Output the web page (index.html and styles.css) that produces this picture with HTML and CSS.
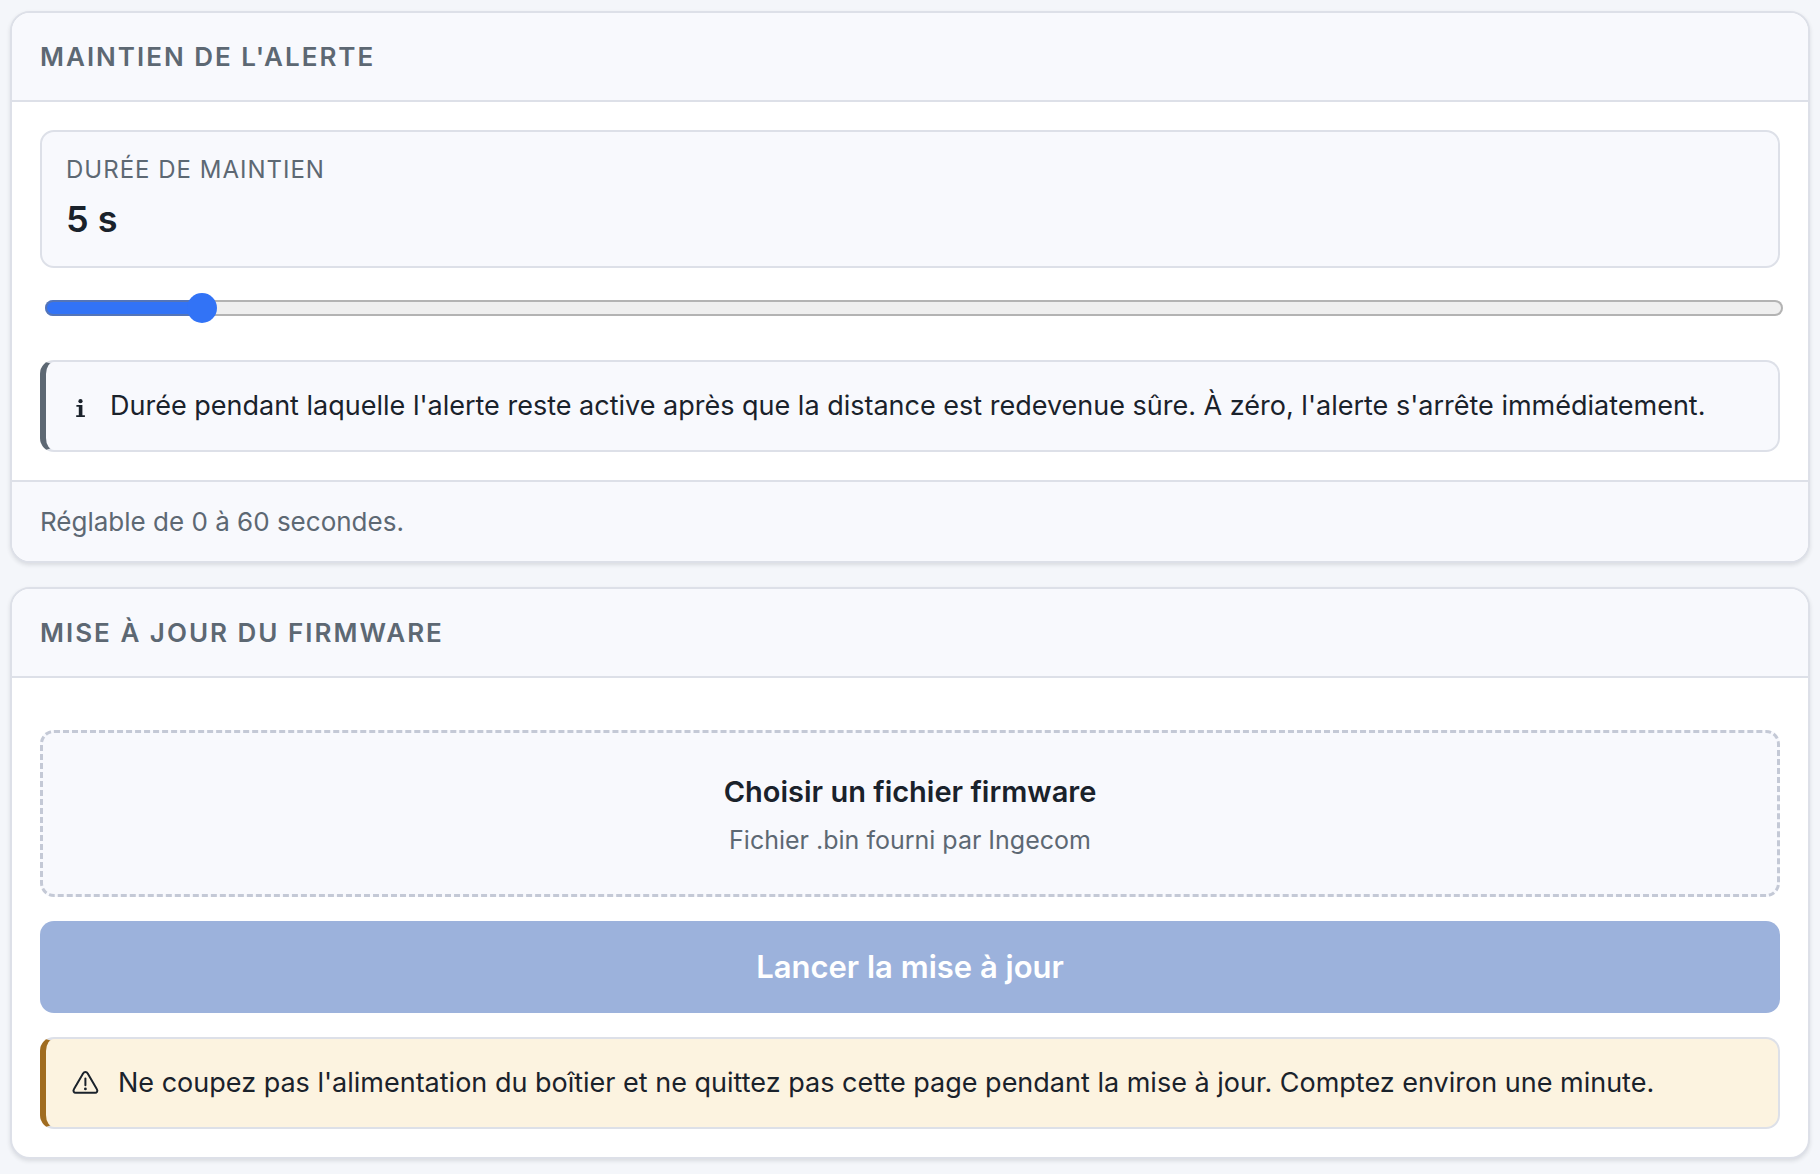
FILE: index.html
```html
<!DOCTYPE html>
<html lang="fr">

<head>
    <meta charset="UTF-8">
    <meta name="viewport" content="width=device-width, initial-scale=1">
    <title>Réglages</title>
    <link rel="stylesheet" href="styles.css">
</head>

<body>
    <main class="page">
        <section class="card">
            <h2 class="card-head">Maintien de l'alerte</h2>
            <div class="card-body">
                <div class="stat">
                    <label class="stat-label" for="hold">Durée de maintien</label>
                    <output class="stat-value" id="holdValue" for="hold">5 s</output>
                </div>
                <input class="slider" id="hold" type="range" min="0" max="60" value="5" style="--pos: 0.0833">
                <div class="note">
                    <svg class="note-icon small" viewBox="0 0 20 28" aria-hidden="true">
                        <circle cx="10.5" cy="9.2" r="2.1" />
                        <path d="M6.4 13h6v10.2h2.5V25H6.2v-1.8h2.6v-8.4H6.4z" />
                    </svg>
                    <p>Durée pendant laquelle l'alerte reste active après que la distance est redevenue sûre. À zéro, l'alerte s'arrête immédiatement.</p>
                </div>
            </div>
            <p class="card-foot">Réglable de 0 à 60 secondes.</p>
        </section>

        <section class="card">
            <h2 class="card-head">Mise à jour du firmware</h2>
            <div class="card-body">
                <label class="drop">
                    <input class="drop-input" type="file" accept=".bin">
                    <span class="drop-title">Choisir un fichier firmware</span>
                    <span class="drop-hint">Fichier .bin fourni par Ingecom</span>
                </label>
                <button class="btn" type="button" disabled>Lancer la mise à jour</button>
                <div class="note warn">
                    <svg class="note-icon" viewBox="0 0 28 28" aria-hidden="true">
                        <path class="line" d="M13.2 4.2a2.5 2.5 0 0 1 4.4 0l9.3 16.1a2.2 2.2 0 0 1-1.9 3.5H5.8a2.2 2.2 0 0 1-1.9-3.5z" />
                        <path class="mark" d="M15.4 9.4v6.8" />
                        <circle cx="15.4" cy="19.9" r="1.4" />
                    </svg>
                    <p>Ne coupez pas l'alimentation du boîtier et ne quittez pas cette page pendant la mise à jour. Comptez environ une minute.</p>
                </div>
            </div>
        </section>
    </main>
    <script>
        var hold = document.getElementById("hold");
        var holdValue = document.getElementById("holdValue");

        hold.oninput = function () {
            holdValue.textContent = hold.value + " s";
            hold.style.setProperty("--pos", hold.value / hold.max);
        }
    </script>
</body>

</html>
```
FILE: styles.css
```css
* {
    box-sizing: border-box;
}

body {
    margin: 0;
    background: #f4f6fa;
    color: #1a222b;
    font-family: Inter, "Liberation Sans", sans-serif;
    font-size: 27px;
    line-height: 40px;
}

h2,
p {
    margin: 0;
}

.page {
    display: flex;
    flex-direction: column;
    gap: 24px;
    padding: 11px 10px;
}

.card {
    overflow: hidden;
    background: #fff;
    border: 2px solid #dde0e8;
    border-radius: 20px;
    box-shadow: 0 2px 4px rgba(26, 34, 43, 0.12);
}

.card-head {
    padding: 24px 28px;
    background: #f8f9fd;
    border-bottom: 2px solid #dde0e8;
    color: #5d6873;
    font-size: 26px;
    font-weight: 600;
    line-height: 39px;
    letter-spacing: 2px;
    text-transform: uppercase;
}

.card-body {
    display: flex;
    flex-direction: column;
    gap: 24px;
    padding: 28px;
}

.card-foot {
    padding: 20px 28px;
    background: #f8f9fd;
    border-top: 2px solid #dde0e8;
    color: #5d6873;
    font-size: 26px;
    line-height: 39px;
}

.stat {
    display: flex;
    flex-direction: column;
    gap: 4px;
    padding: 20px 24px;
    background: #f8f9fd;
    border: 2px solid #dde0e8;
    border-radius: 14px;
}

.stat-label {
    color: #5d6873;
    font-size: 24px;
    line-height: 36px;
    letter-spacing: 1px;
    text-transform: uppercase;
}

.stat-value {
    font-size: 36px;
    font-weight: 600;
    line-height: 54px;
}

/* slider */
.slider {
    -webkit-appearance: none;
    appearance: none;
    height: 32px;
    margin: 0 -3px 12px 5px;
    background: transparent;
    cursor: pointer;
}

.slider::-webkit-slider-runnable-track {
    --stop: calc(15px + (100% - 30px) * var(--pos));
    height: 16px;
    border-radius: 8px;
    background: linear-gradient(to right, #3273f6 var(--stop), #efefef var(--stop));
    box-shadow: inset 0 0 0 2px rgba(120, 120, 120, 0.5);
}

.slider::-webkit-slider-thumb {
    -webkit-appearance: none;
    width: 30px;
    height: 30px;
    margin-top: -7px;
    border-radius: 50%;
    background: #3273f6;
}

/* notes */
.note {
    display: flex;
    align-items: center;
    gap: 20px;
    padding: 24px;
    background: #f8f9fd;
    border: 2px solid #dde0e8;
    border-left: 6px solid #5d6873;
    border-radius: 14px;
}

.note.warn {
    background: #fcf3e0;
    border-left-color: #a06c20;
}

.note-icon {
    flex: none;
    width: 28px;
    height: 28px;
    overflow: visible;
    fill: #1a222b;
}

.note-icon.small {
    width: 20px;
}

.note-icon .line {
    fill: none;
    stroke: #1a222b;
    stroke-width: 2;
}

.note-icon .mark {
    stroke: #1a222b;
    stroke-width: 2;
    stroke-linecap: round;
}

/* firmware */
.drop {
    display: flex;
    flex-direction: column;
    align-items: center;
    gap: 8px;
    margin-top: 24px;
    padding: 38px 36px 34px;
    background: #f8f9fd;
    border: 3px dashed #c4c9d6;
    border-radius: 14px;
    cursor: pointer;
}

.drop-input {
    display: none;
}

.drop-title {
    font-size: 29px;
    font-weight: 600;
    line-height: 42px;
}

.drop-hint {
    color: #5d6873;
    font-size: 25px;
    line-height: 39px;
}

.btn {
    padding: 24px;
    border: 0;
    border-radius: 14px;
    background: #9cb2dc;
    color: #fff;
    font-family: inherit;
    font-size: 31px;
    font-weight: 600;
    line-height: 44px;
}
```
